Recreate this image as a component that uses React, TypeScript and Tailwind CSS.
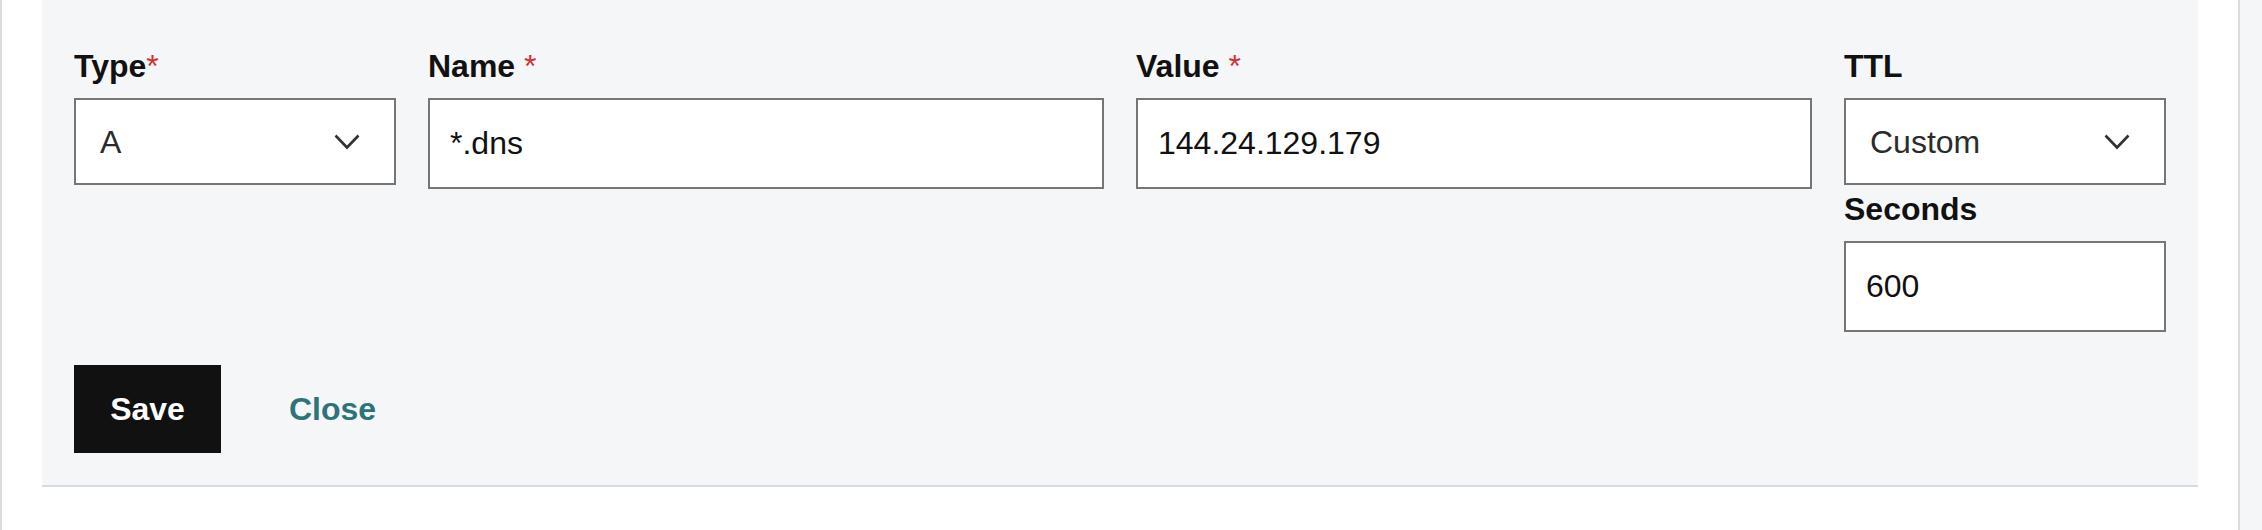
function Chevron() {
  return (
    <svg width="26" height="16" viewBox="0 0 26 16" fill="none" className="shrink-0">
      <path d="M1.5 1.5 L13 13.5 L24.5 1.5" stroke="#333333" strokeWidth="2.6" />
    </svg>
  );
}

type LabelProps = {
  text: string;
  required?: boolean;
  tight?: boolean;
};

function FieldLabel({ text, required, tight }: LabelProps) {
  return (
    <label className="mb-3 block text-[32px] font-bold leading-[40px] text-[#111111]">
      {text}
      {required ? (
        <span className="font-normal text-[#d0312d]">{tight ? '*' : ' *'}</span>
      ) : null}
    </label>
  );
}

function SelectBox({ value }: { value: string }) {
  return (
    <div className="flex h-[87px] items-center justify-between border-2 border-[#767676] bg-white pl-6 pr-[34px] text-[32px] text-[#2b2b2b]">
      <span>{value}</span>
      <Chevron />
    </div>
  );
}

function TextBox({ value }: { value: string }) {
  return (
    <input
      readOnly
      value={value}
      className="block h-[91px] w-full border-2 border-[#767676] bg-white px-5 text-[32px] text-[#111111] outline-none"
    />
  );
}

export default function App() {
  return (
    <div className="flex h-[530px] bg-white" style={{ fontFamily: '"Liberation Sans", Arial, sans-serif' }}>
      <div className="w-[2px] bg-[#d8dce0]" />
      <div className="flex-1 px-10">
        <form
          onSubmit={(event) => event.preventDefault()}
          className="border-b-2 border-[#d6dadf] bg-[#f5f6f8] px-8 pb-8 pt-[46px]"
        >
          <div className="grid grid-cols-[322px_1fr_1fr_322px] gap-8">
            <div>
              <FieldLabel text="Type" required tight />
              <SelectBox value="A" />
            </div>
            <div>
              <FieldLabel text="Name" required />
              <TextBox value="*.dns" />
            </div>
            <div>
              <FieldLabel text="Value" required />
              <TextBox value="144.24.129.179" />
            </div>
            <div>
              <FieldLabel text="TTL" />
              <SelectBox value="Custom" />
              <div className="mt-1">
                <FieldLabel text="Seconds" />
              </div>
              <TextBox value="600" />
            </div>
          </div>
          <div className="mt-[33px] flex items-center gap-8">
            <button
              type="submit"
              className="h-[88px] w-[147px] bg-[#111111] text-[32px] font-bold text-white"
            >
              Save
            </button>
            <button type="button" className="px-9 text-[32px] font-bold text-[#2e7377]">
              Close
            </button>
          </div>
        </form>
      </div>
      <div className="w-[2px] bg-[#d8dce0]" />
      <div className="w-[22px] bg-[#f5f6f8]" />
    </div>
  );
}
